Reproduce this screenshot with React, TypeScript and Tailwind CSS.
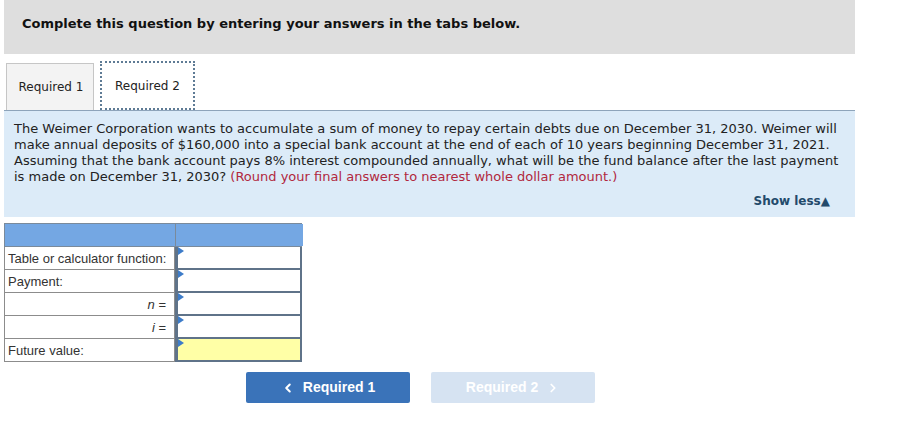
import { ChevronLeft, ChevronRight } from 'lucide-react';

const rows = [
  { label: 'Table or calculator function:', align: 'left', italic: false, yellow: false },
  { label: 'Payment:', align: 'left', italic: false, yellow: false },
  { label: 'n =', align: 'right', italic: true, yellow: false },
  { label: 'i =', align: 'right', italic: true, yellow: false },
  { label: 'Future value:', align: 'left', italic: false, yellow: true },
];

function Marker() {
  return (
    <svg className="absolute left-0 top-0" width="6" height="8" viewBox="0 0 6 8">
      <path d="M0 0 L6 4 L0 8 Z" fill="#3d7cc9" />
    </svg>
  );
}

export default function App() {
  return (
    <div className="w-[916px] h-[439px] bg-white overflow-hidden font-['DejaVu_Sans',Verdana,sans-serif]">
      {/* Header */}
      <div className="ml-[4px] w-[851px] h-[54px] bg-[#dedede] pl-[18px] flex items-center">
        <p className="text-[13px] font-bold text-[#111] pb-[7px]">
          Complete this question by entering your answers in the tabs below.
        </p>
      </div>

      {/* Tabs */}
      <div className="ml-[6px] mt-[7px] flex items-end gap-[6px] h-[49px]">
        <div className="w-[88px] h-[47px] bg-[#f3f3f3] border border-b-0 border-[#c6c6c6] flex items-center justify-center pl-[2px] text-[12px] text-[#222]">
          Required 1
        </div>
        <div className="w-[95px] h-[49px] bg-white border-2 border-dotted border-[#5e7b95] flex items-center justify-center text-[12px] text-[#222]">
          Required 2
        </div>
      </div>

      {/* Question */}
      <div className="ml-[4px] w-[851px] h-[107px] bg-[#dcebf8] border-t border-[#8ea4ba] pl-[10px] pr-[14px] pt-[10px] flex flex-col">
        <p className="text-[13px] leading-[16px] text-[#222]">
          The Weimer Corporation wants to accumulate a sum of money to repay certain debts due on December 31, 2030. Weimer will
          make annual deposits of $160,000 into a special bank account at the end of each of 10 years beginning December 31, 2021.
          Assuming that the bank account pays 8% interest compounded annually, what will be the fund balance after the last payment
          is made on December 31, 2030?{' '}
          <span className="text-[#b1283e]">(Round your final answers to nearest whole dollar amount.)</span>
        </p>
        <div className="mt-auto mb-[7px] flex justify-end pr-[11px]">
          <span className="text-[12px] font-bold text-[#234a6b]">Show less&#9650;</span>
        </div>
      </div>

      {/* Table */}
      <div className="ml-[4px] mt-[6px] w-[298px] font-['Liberation_Sans',Arial,sans-serif]">
        <div className="grid grid-cols-[171px_127px] h-[24px] border border-[#7a8a9b]">
          <div className="bg-[#74a7e3] border-r border-[#7a8a9b]" />
          <div className="bg-[#74a7e3]" />
        </div>
        {rows.map((r) => (
          <div key={r.label} className="grid grid-cols-[171px_127px] h-[23px]">
            <div
              className={`border border-t-0 border-[#8c8c8c] px-[3px] pt-[1px] flex items-center text-[13px] text-[#333] ${
                r.align === 'right' ? 'justify-end pr-[8px]' : ''
              }`}
            >
              {r.italic ? (
                <span>
                  <i>{r.label.slice(0, 1)}</i>
                  {r.label.slice(1)}
                </span>
              ) : (
                r.label
              )}
            </div>
            <div
              className={`relative border-2 border-t-0 border-l-[3px] border-[#5f7389] ${
                r.yellow ? 'bg-[#ffffa6]' : 'bg-white'
              }`}
            >
              <Marker />
            </div>
          </div>
        ))}
      </div>

      {/* Nav buttons */}
      <div className="ml-[246px] mt-[10px] flex gap-[21px] font-['Liberation_Sans',Arial,sans-serif]">
        <button
          type="button"
          className="w-[164px] h-[31px] rounded-[2px] bg-[#3a73b9] text-white text-[14px] font-bold flex items-center justify-center gap-[8px]"
        >
          <ChevronLeft size={14} strokeWidth={3.5} />
          Required 1
        </button>
        <button
          type="button"
          className="w-[164px] h-[31px] rounded-[2px] bg-[#d6e3f2] text-white text-[14px] font-bold flex items-center justify-center gap-[8px]"
        >
          Required 2
          <ChevronRight size={14} strokeWidth={3} />
        </button>
      </div>
    </div>
  );
}
